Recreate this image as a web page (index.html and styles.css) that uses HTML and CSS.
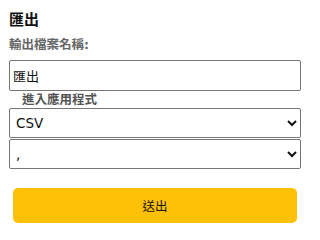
FILE: index.html
```html
<!DOCTYPE html>
<html>
<head>
<meta charset="utf-8">
<link rel="stylesheet" href="styles.css">
</head>
<body>
<form class="export">
  <h3 class="title">匯出</h3>
  <label class="lbl">輸出檔案名稱:</label>
  <input class="field" type="text" value="匯出">
  <div class="sub">進入應用程式</div>
  <select class="field sel"><option>CSV</option></select>
  <select class="field sel"><option>,</option></select>
  <div class="actions"><button class="btn" type="button">送出</button></div>
</form>
</body>
</html>
```
FILE: styles.css
```css
html, body { margin: 0; padding: 0; background: #fff; }
body { font-family: "DejaVu Sans", "Noto Sans CJK TC", sans-serif; color: #222; }
.export { display: flex; flex-direction: column; padding: 10px 9px 0 9px; }
.title { margin: 0; font-size: 15px; font-weight: bold; color: #111; line-height: 20px; }
.lbl { margin-top: 7px; font-size: 12.5px; font-weight: bold; color: #666; line-height: 16px; }
.field { box-sizing: border-box; width: 292px; margin: 0; font-family: "DejaVu Sans", "Noto Sans CJK TC", sans-serif; font-size: 13px; color: #111; background: #fff; border: 1px solid #767676; border-radius: 2px; }
input.field { margin-top: 7px; height: 31px; padding: 0 3px; }
.sub { font-size: 12.5px; font-weight: bold; color: #555; padding-left: 13px; line-height: 16px; margin-top: 1px; }
.sel { height: 30px; padding: 0 2px; font-size: 13.5px; }
.sel + .sel { margin-top: 1px; }
.actions { padding: 19px 4px 0 4px; }
.btn { width: 284px; height: 35px; background: #ffc107; border: none; border-radius: 5px; font-family: "DejaVu Sans", "Noto Sans CJK TC", sans-serif; font-size: 12.5px; color: #111; }
```
